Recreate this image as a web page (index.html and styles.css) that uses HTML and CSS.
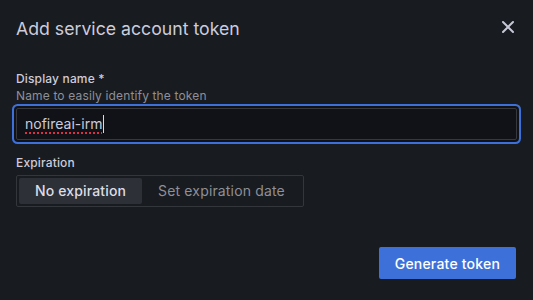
FILE: index.html
```html
<!DOCTYPE html>
<html>
<head>
<meta charset="utf-8">
<link rel="stylesheet" href="styles.css">
</head>
<body>
<div class="modal">
  <div class="header">
    <h2 class="title">Add service account token</h2>
    <button class="close" aria-label="Close">
      <svg viewBox="0 0 24 24" width="24" height="24"><path fill="currentColor" d="M13.41,12l4.3-4.29a1,1,0,1,0-1.42-1.42L12,10.59,7.71,6.29A1,1,0,0,0,6.29,7.71L10.59,12l-4.3,4.29a1,1,0,0,0,0,1.42,1,1,0,0,0,1.42,0L12,13.41l4.29,4.3a1,1,0,0,0,1.42,0,1,1,0,0,0,0-1.42Z"/></svg>
    </button>
  </div>
  <div class="field">
    <div class="label">Display name *</div>
    <div class="desc">Name to easily identify the token</div>
    <div class="input focused"><span class="misspelled">nofireai-irm</span><span class="caret"></span></div>
  </div>
  <div class="field">
    <div class="label">Expiration</div>
    <div class="radio-group">
      <span class="radio selected">No expiration</span>
      <span class="radio">Set expiration date</span>
    </div>
  </div>
  <div class="footer">
    <button class="btn-primary">Generate token</button>
  </div>
</div>
</body>
</html>
```
FILE: styles.css
```css
* { box-sizing: border-box; }
html, body { margin: 0; padding: 0; }
body {
  background: #181b1f;
  font-family: Inter, "Noto Sans", sans-serif;
  color: #ccccdc;
  width: 533px;
  height: 300px;
  overflow: hidden;
}
.modal {
  padding: 15px 16px 0 16px;
}
.header {
  display: flex;
  justify-content: space-between;
  align-items: flex-start;
  height: 25px;
  margin-bottom: 31px;
}
.title {
  margin: 3px 0 0 0;
  font-size: 17.7px;
  line-height: 22px;
  font-weight: 400;
  color: #ccccdc;
}
.close {
  background: none;
  border: 0;
  padding: 0;
  margin-right: -3px;
  width: 24px;
  height: 24px;
  color: #c7c8d6;
  display: flex;
}
.field { margin-bottom: 15px; }
.label {
  font-size: 12px;
  line-height: 16px;
  font-weight: 500;
  letter-spacing: 0.15px;
  color: #ccccdc;
}
.desc {
  margin-top: 1px;
  font-size: 12px;
  line-height: 16px;
  letter-spacing: 0.15px;
  color: #8e8f99;
}
.input {
  margin-top: 4px;
  height: 32px;
  background: #111217;
  border: 1px solid #37383e;
  border-radius: 2px;
  padding: 0 8px;
  font-size: 14px;
  line-height: 30px;
  color: #ccccdc;
  display: flex;
  align-items: center;
}
.input.focused {
  box-shadow: 0 0 0 2px #111217, 0 0 0 4px #3d71d9;
}
.misspelled {
  text-decoration: underline dotted #e02f44;
  text-decoration-thickness: 2px;
  text-underline-offset: 3px;
}
.caret {
  display: inline-block;
  width: 1px;
  height: 18px;
  background: #d8d9e3;
  margin-left: 1px;
}
.radio-group {
  margin-top: 4px;
  display: inline-flex;
  border: 1px solid #33363b;
  border-radius: 2px;
  padding: 2px;
  height: 32px;
}
.radio {
  height: 26px;
  padding: 0 16px;
  font-size: 14px;
  line-height: 26px;
  letter-spacing: 0.15px;
  color: #8e8f99;
  border-radius: 2px;
}
.radio.selected {
  background: #2d3036;
  color: #dcdde6;
  font-weight: 500;
}
.footer {
  margin-top: 40px;
  display: flex;
  justify-content: flex-end;
  padding-right: 1px;
}
.btn-primary {
  background: #3d71d9;
  color: #ffffff;
  border: 0;
  border-radius: 2px;
  height: 32px;
  padding: 0 16px;
  font-family: Inter, "Noto Sans", sans-serif;
  font-size: 14px;
  font-weight: 500;
  letter-spacing: 0.2px;
}
```
